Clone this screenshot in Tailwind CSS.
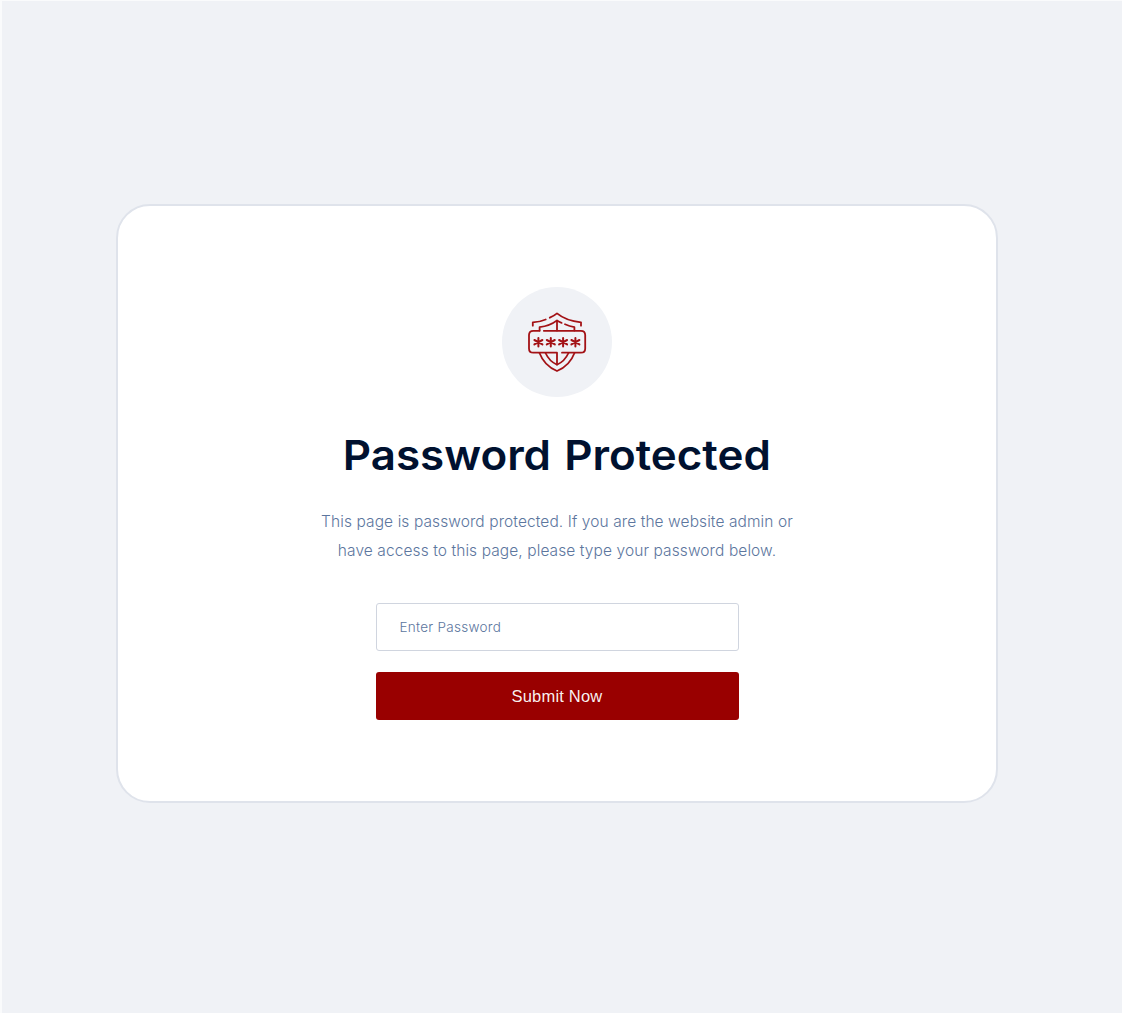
<!DOCTYPE html>
<html lang="en">
<head>
    <meta charset="UTF-8">
    <meta name="viewport" content="width=device-width, initial-scale=1.0">
    <title>Password Protected</title>
    <!-- Tailwind CSS -->
    <script src="https://cdn.jsdelivr.net/npm/@tailwindcss/browser@4"></script>
</head>
<body class="h-screen overflow-hidden bg-[#f0f2f6] border-t border-l-2 border-[#fafbfc] pt-[203px] pl-[114px] font-['Inter',sans-serif]">
    <main class="flex w-[882px] h-[599px] flex-col items-center rounded-[34px] border-2 border-[#dfe3eb] bg-white pt-[81px]">
        <div class="flex size-[110px] shrink-0 items-center justify-center rounded-full bg-[#f0f2f6]">
            <!-- Shield with password field -->
            <svg class="size-[70px] text-[#a31216]" viewBox="0 0 70 70" fill="none" stroke="currentColor" stroke-width="1.8" stroke-linecap="round" stroke-linejoin="round">
                <path d="M10.8 18.7V15.3Q18 15 23.7 12.5M27.8 10.7Q32 8.9 35 6.4Q44 13.8 59 15.3V18.7" />
                <path d="M17.6 23.5V20.2Q28 19 35 13.4Q37 15 39.6 15.9M43 17.3Q47.5 19.4 52.4 20.2V23.5M35 13.4V23.6" />
                <path d="M17.6 23.8H11.3Q7 23.8 7 28.1V41.4Q7 45.7 11.3 45.7H35V57.5M21.8 23.8H58.9Q63.2 23.8 63.2 28.1V41.4Q63.2 45.7 58.9 45.7H40" />
                <path d="M17.5 46C20.5 54 26.5 60.5 35 64C43.5 60.5 49.5 54 52.5 46M23.5 46C26 51.5 30 55.5 35 57.7C40 55.5 44 51.5 46.5 46" />
                <path stroke-width="2" d="M16.4 30.9v8.6M12.4 33l8 4.4M20.4 33l-8 4.4M28.8 30.9v8.6M24.8 33l8 4.4M32.8 33l-8 4.4M41.1 30.9v8.6M37.1 33l8 4.4M45.1 33l-8 4.4M53.4 30.9v8.6M49.4 33l8 4.4M57.4 33l-8 4.4" />
            </svg>
        </div>
        <h1 class="mt-[33px] scale-x-[1.071] [word-spacing:2px] whitespace-nowrap text-[41px] leading-[50px] font-semibold text-[#00112f]">Password Protected</h1>
        <p class="mt-[27px] text-center whitespace-nowrap text-[15.5px] leading-[29px] font-light tracking-[0.09px] text-[#5c769e]">This page is password protected. If you are the website admin or<br>have access to this page, please type your password below.</p>
        <form class="mt-[38px] flex w-[363px] flex-col gap-[21px]">
            <input type="password" placeholder="Enter Password" class="h-12 rounded-[3px] border border-[#d0d5df] bg-white px-[23px] text-[13.5px] font-light tracking-[0.28px] text-[#5c769e] outline-none placeholder:text-[#5c769e]">
            <button type="button" class="h-12 rounded-[3px] bg-[#990000] font-['Liberation_Sans',sans-serif] text-[16.5px] tracking-[0.2px] text-white/95">Submit Now</button>
        </form>
    </main>
</body>
</html>
